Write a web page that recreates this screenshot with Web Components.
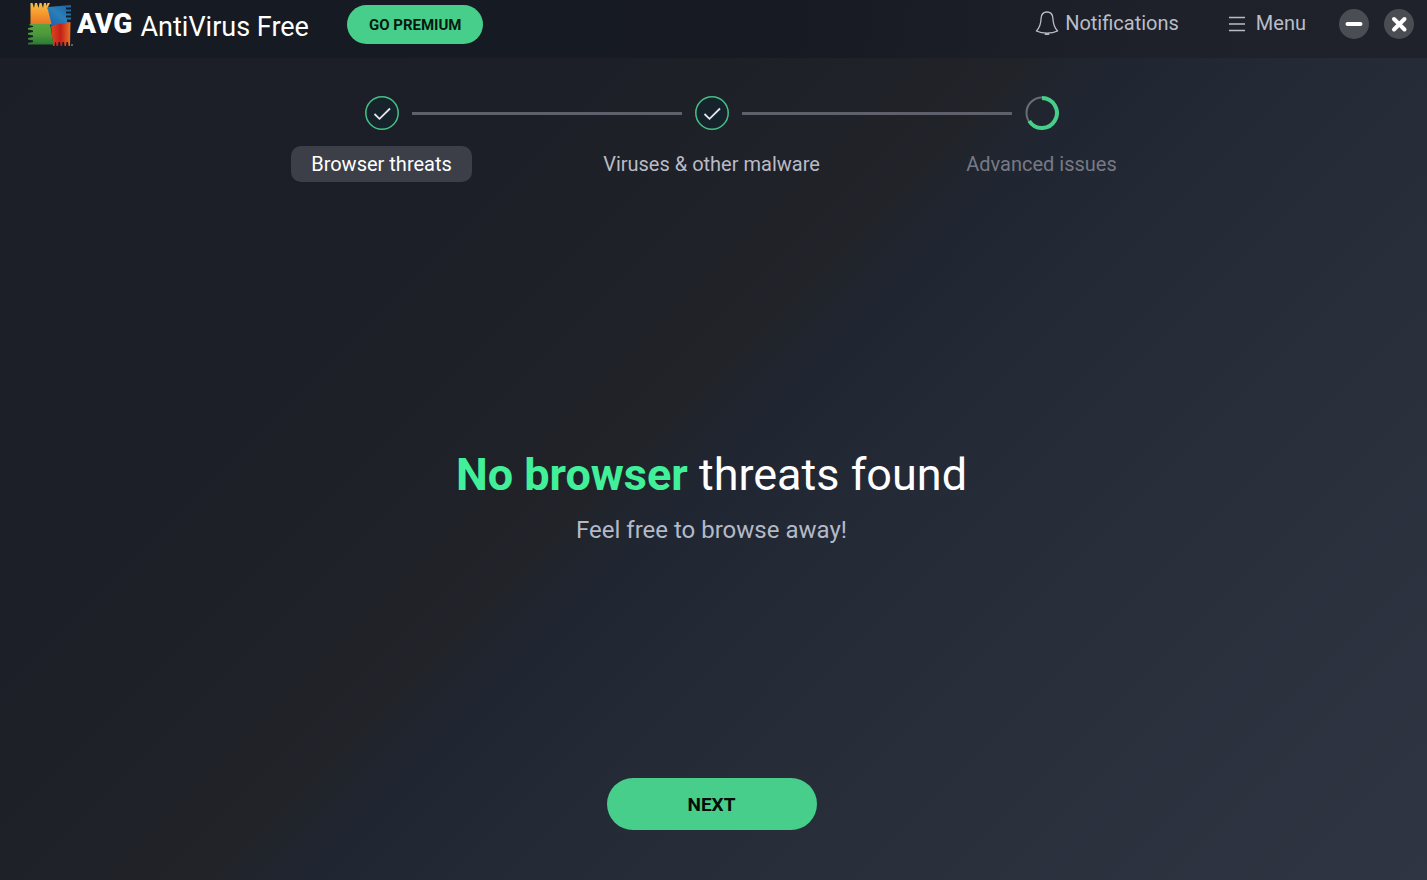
<!DOCTYPE html>
<html lang="en">
<head>
<meta charset="utf-8">
<meta name="viewport" content="width=device-width, initial-scale=1">
<title>AVG AntiVirus Free</title>
<style>
  body {
    margin: 0;
    font-family: Roboto, "Liberation Sans", sans-serif;
    color: #fff;
    background: #1c1f26;
  }
</style>
</head>
<body>
<avg-window></avg-window>

<template id="avg-window">
  <style>
    :host {
      display: flex;
      flex-direction: column;
      min-height: 100vh;
      background: linear-gradient(135deg, #1b1e26 0%, #1c1f27 28%, #212329 47%, #202631 51%, #242a36 61%, #2a303c 80%, #2f3542 100%);
    }
    main {
      flex: 1;
      display: flex;
      flex-direction: column;
      align-items: center;
      padding: 38px 4px 50px 0;
    }
    scan-steps { align-self: stretch; }
    scan-result { flex: 1; }
  </style>
  <title-bar></title-bar>
  <main>
    <scan-steps>
      <scan-step state="done" current>Browser threats</scan-step>
      <scan-step state="done">Viruses &amp; other malware</scan-step>
      <scan-step state="running">Advanced issues</scan-step>
    </scan-steps>
    <scan-result>
      <strong slot="lead">No browser</strong>
      <span slot="rest">threats found</span>
      <span slot="note">Feel free to browse away!</span>
    </scan-result>
    <pill-button size="large">NEXT</pill-button>
  </main>
</template>

<template id="title-bar">
  <style>
    :host { display: block; background: linear-gradient(100deg, #161a22 0%, #171a22 55%, #1e2129 80%, #1f222a 100%); }
    header {
      display: flex;
      align-items: center;
      height: 48px;
      padding: 0 13px 10px 28px;
    }
    .name { font-size: 27px; line-height: 32px; padding: 6px 38px 0 8px; white-space: nowrap; }
    .space { flex: 1; }
    nav { display: flex; gap: 49px; padding: 0 33px 2px 0; }
    .tools { display: flex; gap: 15px; }
  </style>
  <header>
    <avg-logo></avg-logo>
    <span class="name">AntiVirus Free</span>
    <pill-button>GO PREMIUM</pill-button>
    <span class="space"></span>
    <nav>
      <bar-link>
        <svg slot="icon" width="24" height="24" viewBox="0 0 24 24" fill="none" stroke="#b9bdc8" stroke-width="1.3" stroke-linejoin="round" aria-hidden="true">
          <path d="M12 1C8.4 1 6.3 3.4 6.1 7.2C5.9 12.8 4.8 16.6 1.4 20C4.5 21.5 8 22.2 12 22.2S19.5 21.5 22.6 20C19.2 16.6 18.1 12.8 17.9 7.2C17.7 3.4 15.6 1 12 1Z"/>
          <path d="M10 22.4Q12 24.2 14 22.4" stroke-width="2"/>
        </svg>
        Notifications
      </bar-link>
      <bar-link wide>
        <svg slot="icon" width="18" height="24" viewBox="0 0 18 24" stroke="#b9bdc8" stroke-width="1.4" aria-hidden="true">
          <path d="M1 6.5H17M1 13H17M1 19.5H17"/>
        </svg>
        Menu
      </bar-link>
    </nav>
    <div class="tools">
      <round-button label="Minimize"><svg width="30" height="30" viewBox="0 0 30 30" aria-hidden="true"><path d="M8.500 15H21.500" stroke="#fff" stroke-width="4" stroke-linecap="round"/></svg></round-button>
      <round-button label="Close"><svg width="30" height="30" viewBox="0 0 30 30" aria-hidden="true"><path d="M10 10L20.500 20.500M20.500 10L10 20.500" stroke="#fff" stroke-width="4" stroke-linecap="round"/></svg></round-button>
    </div>
  </header>
</template>

<template id="avg-logo">
  <style>
    :host { display: flex; align-items: center; gap: 4px; }
    svg { display: block; }
    b { font-size: 28px; line-height: 32px; font-weight: 900; }
  </style>
  <svg width="45" height="46" viewBox="0 0 45 46" aria-hidden="true">
    <defs>
      <linearGradient id="o" x1="0" y1="0" x2="0" y2="1"><stop offset="0" stop-color="#f6c04a"/><stop offset=".5" stop-color="#f59a2c"/><stop offset="1" stop-color="#e9762a"/></linearGradient>
      <linearGradient id="b" x1="1" y1="0" x2="0" y2="1"><stop offset="0" stop-color="#1d5f9c"/><stop offset=".5" stop-color="#2a80b8"/><stop offset="1" stop-color="#1b5fae"/></linearGradient>
      <linearGradient id="g" x1="0" y1="1" x2="0" y2="0"><stop offset="0" stop-color="#2c7a34"/><stop offset=".5" stop-color="#4c9a3c"/><stop offset="1" stop-color="#5aa53c"/></linearGradient>
      <linearGradient id="r" x1="0" y1="0" x2="1" y2="0"><stop offset="0" stop-color="#e0451c"/><stop offset=".5" stop-color="#c4201a"/><stop offset="1" stop-color="#ea7426"/></linearGradient>
    </defs>
    <path fill="url(#b)" d="M20 6L43 4V6.500H38V8.500H43V10.500H38V12.500H43V14.500H38V16.500H43V18.500H39V20.500L42 22V24H20Z"/>
    <path fill="url(#r)" d="M23 24.500L42.500 21L42 45H40.500L40 41H38.500L38 45H36.500L36 41H34.500L34 45H32.500L32 41H30.500L30 45H28.500L28 41H27L26.500 45H25Z"/>
    <path fill="url(#g)" d="M3 22.500H22L25.500 43.500H0V42L5 41V39.500L0 38.500V37L5 36V34.500L0 33.500V32L5 31V29.500L0 28.500V27L5 26V25L1 24Z"/>
    <path fill="url(#o)" d="M2.500 23V2H4.500L6 7L7 2H9L10.500 7L11.500 2H13.500L15 7L16 2H18L18.500 5L19.500 2H22L19.500 7L23.500 23Z"/>
    <circle cx="44" cy="44" r=".8" fill="#b9bdc8"/>
  </svg>
  <b>AVG</b>
</template>

<template id="pill-button">
  <style>
    :host { display: block; }
    button {
      display: block;
      height: 39px;
      padding: 1px 22px 0;
      border: 0;
      border-radius: 26px;
      background: #46ce8a;
      color: #07190f;
      font: 700 15px/38px Roboto, "Liberation Sans", sans-serif;
      white-space: nowrap;
      cursor: pointer;
    }
    :host([size="large"]) button {
      height: 52px;
      min-width: 210px;
      padding-top: 2px;
      font-size: 19px;
      line-height: 50px;
      color: #040d08;
    }
  </style>
  <button type="button"><slot></slot></button>
</template>

<template id="bar-link">
  <style>
    :host { display: block; }
    button {
      display: flex;
      align-items: center;
      gap: 6px;
      padding: 0;
      border: 0;
      background: none;
      color: #b9bdc8;
      font: 400 20px/24px Roboto, "Liberation Sans", sans-serif;
      cursor: pointer;
    }
    :host([wide]) button { gap: 10px; }
  </style>
  <button type="button"><slot name="icon"></slot><span><slot></slot></span></button>
</template>

<template id="round-button">
  <style>
    :host { display: block; }
    button {
      display: block;
      width: 30px;
      height: 30px;
      padding: 0;
      border: 0;
      border-radius: 50%;
      background: #4b4d55;
      cursor: pointer;
    }
    ::slotted(svg) { display: block; }
  </style>
  <button type="button"><slot></slot></button>
</template>

<template id="scan-steps">
  <style>
    :host { display: grid; grid-template-columns: repeat(3, minmax(0, 330px)); justify-content: center; }
  </style>
  <slot></slot>
</template>

<template id="scan-step">
  <style>
    :host { display: flex; flex-direction: column; align-items: center; gap: 16px; }
    .track { align-self: stretch; display: flex; align-items: center; gap: 13px; }
    .track::before, .track::after { content: ""; flex: 1; height: 3px; background: #5e616b; }
    :host(:first-child) .track::before, :host(:last-child) .track::after { visibility: hidden; }
    svg { display: block; }
    .running, :host([state="running"]) .done { display: none; }
    :host([state="running"]) .running { display: block; }
    button {
      height: 36px;
      padding: 0 20px;
      border: 0;
      border-radius: 10px;
      background: none;
      color: #b9bcc6;
      font: 400 20px/36px Roboto, "Liberation Sans", sans-serif;
      white-space: nowrap;
      cursor: pointer;
    }
    :host([current]) button { background: #3c3f48; color: #fff; }
    :host([state="running"]) button { color: #777a85; }
  </style>
  <div class="track">
    <svg class="done" width="34" height="34" viewBox="0 0 34 34" fill="none" aria-hidden="true">
      <circle cx="17" cy="17" r="16.2" fill="#17232a" stroke="#46bf88" stroke-width="1.5"/>
      <path d="M9.5 18L14.5 22.8L25 12.5" stroke="#e4e6ec" stroke-width="1.8"/>
    </svg>
    <svg class="running" width="34" height="34" viewBox="0 0 34 34" fill="none" aria-hidden="true">
      <circle cx="17" cy="17" r="15.5" stroke="#6a6d77" stroke-width="2"/>
      <path d="M17 2A15 15 0 1 1 4.2 25" stroke="#46ce8a" stroke-width="4"/>
    </svg>
  </div>
  <button type="button"><slot></slot></button>
</template>

<template id="scan-result">
  <style>
    :host { display: flex; flex-direction: column; align-items: center; justify-content: center; padding-top: 32px; gap: 12px; text-align: center; }
    h1 { margin: 0; font-size: 45px; line-height: 56px; font-weight: 400; }
    p { margin: 0; font-size: 24px; line-height: 30px; color: #b4b9c8; }
    ::slotted(strong) { font-weight: 700; color: #42f09a; }
  </style>
  <h1><slot name="lead"></slot> <slot name="rest"></slot></h1>
  <p><slot name="note"></slot></p>
</template>

<script>
  class TemplateElement extends HTMLElement {
    constructor() {
      super();
      const template = document.getElementById(this.localName);
      this.attachShadow({ mode: "open" }).append(template.content.cloneNode(true));
    }
  }

  class RoundButton extends TemplateElement {
    connectedCallback() {
      this.shadowRoot.querySelector("button").setAttribute("aria-label", this.getAttribute("label"));
    }
  }

  class ScanStep extends TemplateElement {
    connectedCallback() {
      if (this.hasAttribute("current")) {
        this.shadowRoot.querySelector("button").setAttribute("aria-current", "step");
      }
    }
  }

  customElements.define("avg-logo", class extends TemplateElement {});
  customElements.define("pill-button", class extends TemplateElement {});
  customElements.define("bar-link", class extends TemplateElement {});
  customElements.define("round-button", RoundButton);
  customElements.define("title-bar", class extends TemplateElement {});
  customElements.define("scan-step", ScanStep);
  customElements.define("scan-steps", class extends TemplateElement {});
  customElements.define("scan-result", class extends TemplateElement {});
  customElements.define("avg-window", class extends TemplateElement {});
</script>
</body>
</html>
